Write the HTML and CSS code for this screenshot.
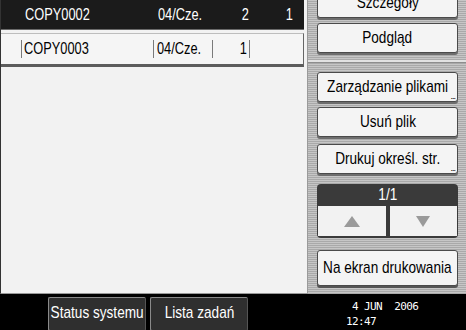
FILE: index.html
```html
<!DOCTYPE html>
<html>
<head>
<meta charset="utf-8">
<link rel="stylesheet" href="styles.css">
</head>
<body>
<div class="screen">
  <div class="list">
    <div class="row row-sel">
      <span class="cell c-name"><span class="tx">COPY0002</span></span>
      <span class="cell c-date"><span class="tx">04/Cze.</span></span>
      <span class="cell c-num"><span class="tx tr">2</span></span>
      <span class="cell c-last"><span class="tx tr">1</span></span>
    </div>
    <div class="row row-item">
      <span class="cell c-name sep"><span class="tx">COPY0003</span></span>
      <span class="cell c-date sep"><span class="tx">04/Cze.</span></span>
      <span class="cell c-num sep"><span class="tx tr">1</span></span>
      <span class="cell c-last sep"></span>
    </div>
  </div>
  <div class="side">
    <div class="btn b-det"><span class="tx tc">Szczegóły</span></div>
    <div class="btn b-prev"><span class="tx tc">Podgląd</span></div>
    <div class="divider"></div>
    <div class="btn b-files"><span class="tx tc">Zarządzanie plikami</span><span class="more">...</span></div>
    <div class="btn b-del"><span class="tx tc">Usuń plik</span></div>
    <div class="btn b-print"><span class="tx tc">Drukuj określ. str.</span><span class="more">...</span></div>
    <div class="pager">
      <div class="pager-head"><span class="tx tc">1/1</span></div>
      <div class="pager-btns">
        <div class="pbtn"><svg width="16" height="11" viewBox="0 0 16 11"><polygon points="8,0 16,11 0,11" fill="#9a9a9a"/></svg></div>
        <div class="pbtn"><svg width="14" height="11" viewBox="0 0 14 11"><polygon points="0,0 14,0 7,11" fill="#9a9a9a"/></svg></div>
      </div>
    </div>
    <div class="btn b-screen"><span class="tx tc">Na ekran drukowania</span></div>
  </div>
  <div class="bottom">
    <div class="bbtn"><span class="tx tc">Status systemu</span></div>
    <div class="bbtn"><span class="tx tc">Lista zadań</span></div>
    <div class="clock"> 4 JUN  2006
12:47</div>
  </div>
</div>
</body>
</html>
```
FILE: styles.css
```css
html, body {
  margin: 0;
  padding: 0;
  background: #000;
}
body {
  width: 466px;
  height: 330px;
  overflow: hidden;
  font-family: "Liberation Sans", Arial, sans-serif;
  font-size: 16px;
}
.tx {
  display: inline-block;
  white-space: nowrap;
  transform: scaleX(0.8);
  transform-origin: left center;
}
.tx.tc { transform-origin: center center; }
.tx.tr { transform-origin: right center; }

.screen {
  display: grid;
  grid-template-columns: 307px 159px;
  grid-template-rows: 294px 36px;
  width: 466px;
  height: 330px;
}
.list {
  background: #f2f2f2;
  border-left: 1px solid #333;
  border-bottom: 1px solid #999;
  box-sizing: border-box;
  overflow: hidden;
}
.row {
  display: flex;
  align-items: center;
  color: #000;
}
.row-sel {
  height: 29px;
  background: #1b1b1b;
  color: #fff;
  margin-right: 3px;
  border-bottom: 1px solid #6a6a6a;
}
.row-item {
  margin-top: 3px;
  height: 30px;
  margin-right: 3px;
  margin-left: -1px;
  background: #f5f5f5;
  border-top: 1px solid #bdbdbd;
  border-right: 1px solid #666;
  border-bottom: 3px solid #5c5c5c;
}
.cell {
  display: flex;
  align-items: center;
  box-sizing: border-box;
  white-space: nowrap;
  height: 18px;
}
.c-name { margin-left: 22px; width: 132px; padding-left: 2px; }
.c-date { width: 59px; padding-left: 3px; }
.c-num { width: 37px; justify-content: flex-end; padding-right: 2px; }
.c-last { width: 43px; justify-content: flex-end; padding-right: 1px; }
.row-item .c-name { margin-left: 21px; }
.sep { border-left: 1px solid #7a7a7a; }

.side {
  background-color: #b7b7b7;
  background-image: repeating-linear-gradient(to bottom, #c6c6c6 0, #c6c6c6 1px, #a9a9a9 1px, #a9a9a9 2px);
  padding: 0 8px 0 9px;
  display: flex;
  flex-direction: column;
  overflow: hidden;
  border-left: 1px solid #9a9a9a;
}
.btn {
  position: relative;
  background: #f4f4f4;
  border: 1px solid #4a4a4a;
  border-radius: 3px;
  box-shadow: 0 2px 0 #6d6d6d;
  height: 28px;
  display: flex;
  align-items: center;
  justify-content: center;
  color: #000;
  font-size: 17px;
  white-space: nowrap;
  flex: none;
}
.b-det { margin-top: -12px; }
.b-prev { margin-top: 5px; }
.divider {
  height: 2px;
  margin: 7px -8px 0 -9px;
  background: #e2e2e2;
  border-bottom: 1px solid #8d8d8d;
  flex: none;
}
.b-files { margin-top: 9px; }
.b-del { margin-top: 5px; }
.b-print { margin-top: 7px; }
.more {
  position: absolute;
  right: 2px;
  bottom: 3px;
  font-size: 9px;
  line-height: 4px;
  letter-spacing: -1px;
}
.pager {
  margin-top: 10px;
  background: #3a3a3a;
  border-radius: 4px;
  padding: 0 1px 2px 1px;
  flex: none;
}
.pager-head {
  height: 22px;
  display: flex;
  align-items: center;
  justify-content: center;
  color: #fff;
  font-size: 17px;
}
.pager-btns {
  display: flex;
  gap: 4px;
}
.pbtn {
  flex: 1;
  height: 30px;
  background: #f2f2f2;
  display: flex;
  align-items: center;
  justify-content: center;
}
.b-screen {
  margin-top: 12px;
  height: 34px;
  box-shadow: 0 2px 0 #555;
}

.bottom {
  grid-column: 1 / 3;
  background: #000;
  display: flex;
  align-items: flex-start;
  padding-left: 48px;
  gap: 4px;
}
.bbtn {
  margin-top: 3px;
  width: 98px;
  height: 34px;
  box-sizing: border-box;
  background: #2f2f2f;
  border: 1px solid #8a8a8a;
  border-right-color: #555;
  border-radius: 2px;
  color: #fff;
  font-size: 17px;
  display: flex;
  align-items: center;
  justify-content: center;
  white-space: nowrap;
  padding-bottom: 2px;
}
.clock {
  margin-left: 94px;
  margin-top: 5px;
  font-family: "DejaVu Sans Mono", monospace;
  font-size: 11px;
  letter-spacing: -0.6px;
  line-height: 15px;
  color: #fff;
  white-space: pre;
}
```
